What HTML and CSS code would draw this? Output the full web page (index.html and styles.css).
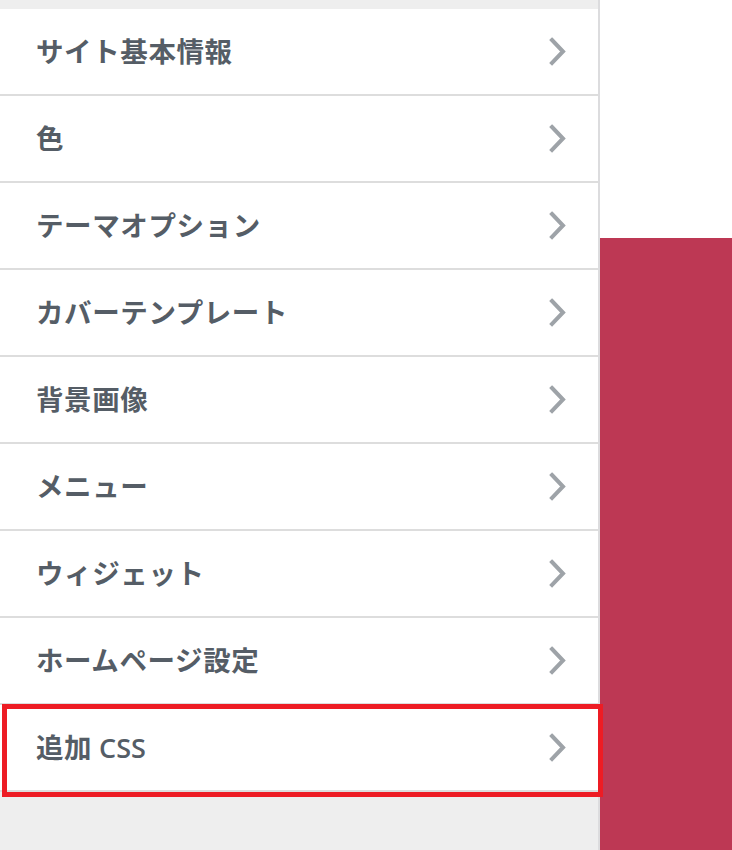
FILE: index.html
```html
<!DOCTYPE html>
<html lang="ja">
<head>
<meta charset="utf-8">
<link rel="stylesheet" href="styles.css">
</head>
<body>
<div class="layout">
  <div class="panel">
    <ul class="menu">
      <li class="item"><span class="label">サイト基本情報</span><svg class="chev" viewBox="0 0 20 30" width="20" height="30"><polyline points="4,3 15,14.5 4,26"/></svg></li>
      <li class="item"><span class="label">色</span><svg class="chev" viewBox="0 0 20 30" width="20" height="30"><polyline points="4,3 15,14.5 4,26"/></svg></li>
      <li class="item"><span class="label">テーマオプション</span><svg class="chev" viewBox="0 0 20 30" width="20" height="30"><polyline points="4,3 15,14.5 4,26"/></svg></li>
      <li class="item"><span class="label">カバーテンプレート</span><svg class="chev" viewBox="0 0 20 30" width="20" height="30"><polyline points="4,3 15,14.5 4,26"/></svg></li>
      <li class="item"><span class="label">背景画像</span><svg class="chev" viewBox="0 0 20 30" width="20" height="30"><polyline points="4,3 15,14.5 4,26"/></svg></li>
      <li class="item"><span class="label">メニュー</span><svg class="chev" viewBox="0 0 20 30" width="20" height="30"><polyline points="4,3 15,14.5 4,26"/></svg></li>
      <li class="item"><span class="label">ウィジェット</span><svg class="chev" viewBox="0 0 20 30" width="20" height="30"><polyline points="4,3 15,14.5 4,26"/></svg></li>
      <li class="item"><span class="label">ホームページ設定</span><svg class="chev" viewBox="0 0 20 30" width="20" height="30"><polyline points="4,3 15,14.5 4,26"/></svg></li>
      <li class="item item-highlight"><span class="label">追加 <span class="latin">CSS</span></span><svg class="chev" viewBox="0 0 20 30" width="20" height="30"><polyline points="4,3 15,14.5 4,26"/></svg><span class="highlight"></span></li>
    </ul>
  </div>
  <div class="preview">
    <div class="preview-top"></div>
    <div class="preview-body"></div>
  </div>
</div>
</body>
</html>
```

FILE: styles.css
```css
html, body {
  margin: 0;
  padding: 0;
  height: 100%;
}
body {
  background: #eeeeee;
  font-family: "Noto Sans CJK JP", "Noto Sans", sans-serif;
  overflow: hidden;
}
.layout {
  display: flex;
  height: 850px;
}
.panel {
  width: 598px;
  flex: 0 0 598px;
  background: #eeeeee;
  border-right: 2px solid #dcdcde;
  padding-top: 9px;
  position: relative;
  z-index: 1;
}
.menu {
  list-style: none;
  margin: 0;
  padding: 0;
}
.item {
  position: relative;
  display: flex;
  align-items: center;
  justify-content: space-between;
  height: 85px;
  background: #ffffff;
  border-bottom: 2px solid #dddddd;
  padding: 0 30px 0 36px;
}
.label {
  font-size: 27.5px;
  font-weight: 700;
  color: #555d66;
  letter-spacing: 0.6px;
  line-height: 1;
  margin-top: -1px;
}
.latin {
  font-family: "Open Sans", "Noto Sans", sans-serif;
  font-weight: 600;
  font-size: 27px;
  letter-spacing: 0;
}
.chev {
  display: block;
  margin-top: 1px;
}
.chev polyline {
  fill: none;
  stroke: #9ea3a8;
  stroke-width: 4;
  stroke-linecap: square;
  stroke-linejoin: miter;
}
.highlight {
  position: absolute;
  left: 2px;
  top: -1px;
  width: 601px;
  height: 93px;
  border: 5px solid #ed1c24;
  box-sizing: border-box;
  pointer-events: none;
}
.preview {
  flex: 1;
  display: flex;
  flex-direction: column;
}
.preview-top {
  height: 238px;
  background: #ffffff;
}
.preview-body {
  flex: 1;
  background: #bd3854;
}
```
